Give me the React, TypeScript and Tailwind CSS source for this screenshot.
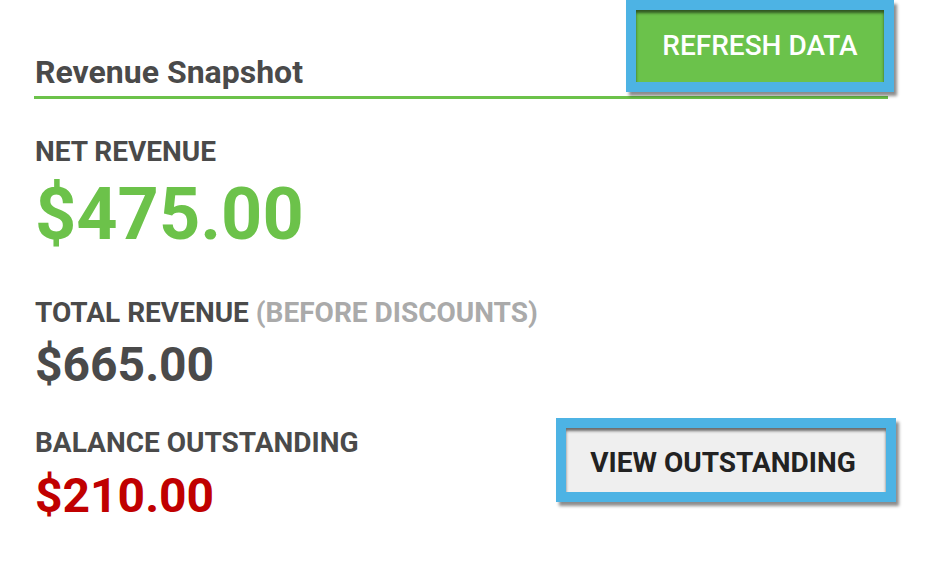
export default function App() {
  return (
    <div className="w-[952px] h-[568px] bg-white pl-[34px] pr-[64px] font-['Roboto',sans-serif] text-[#4a4a4a] overflow-hidden">
      {/* Header */}
      <div className="flex items-end justify-between">
        <h2 className="text-[32px] font-bold leading-none pb-[4px] pl-[1px]">Revenue Snapshot</h2>
        <button className="w-[268px] h-[92px] mr-[-6px] border-[10px] border-[#4db3e4] bg-[#6bc24b] text-white text-[28px] font-medium shadow-[3px_4px_3px_rgba(0,0,0,0.45)] inset-shadow-[0_3px_3px_rgba(0,0,0,0.55)] flex items-center justify-center">
          REFRESH DATA
        </button>
      </div>
      <div className="h-[3px] bg-[#6cc24a] mt-[4px]" />

      {/* Net revenue */}
      <div className="pl-[1px] pt-[39px]">
        <div className="text-[28px] font-bold leading-none">NET REVENUE</div>
        <div className="text-[72px] font-bold leading-none mt-[13px] text-[#6cc24a]">$475.00</div>
      </div>

      {/* Total revenue */}
      <div className="pl-[1px] pt-[48px]">
        <div className="text-[28px] font-bold leading-none">
          TOTAL REVENUE <span className="text-[#aaaaaa]">(BEFORE DISCOUNTS)</span>
        </div>
        <div className="text-[48px] font-bold leading-none mt-[14px]">$665.00</div>
      </div>

      {/* Balance outstanding */}
      <div className="flex items-start justify-between pt-[40px]">
        <div className="pl-[1px]">
          <div className="text-[28px] font-bold leading-none">BALANCE OUTSTANDING</div>
          <div className="text-[48px] font-bold leading-none mt-[15px] text-[#c00000]">$210.00</div>
        </div>
        <button className="w-[340px] h-[84px] mr-[-8px] mt-[-11px] pt-[5px] pr-[6px] border-[10px] border-[#4db3e4] bg-[#efefef] text-[#222222] text-[28px] font-bold shadow-[3px_4px_3px_rgba(0,0,0,0.45)] inset-shadow-[0_3px_3px_rgba(0,0,0,0.55)] flex items-center justify-center">
          VIEW OUTSTANDING
        </button>
      </div>
    </div>
  );
}
